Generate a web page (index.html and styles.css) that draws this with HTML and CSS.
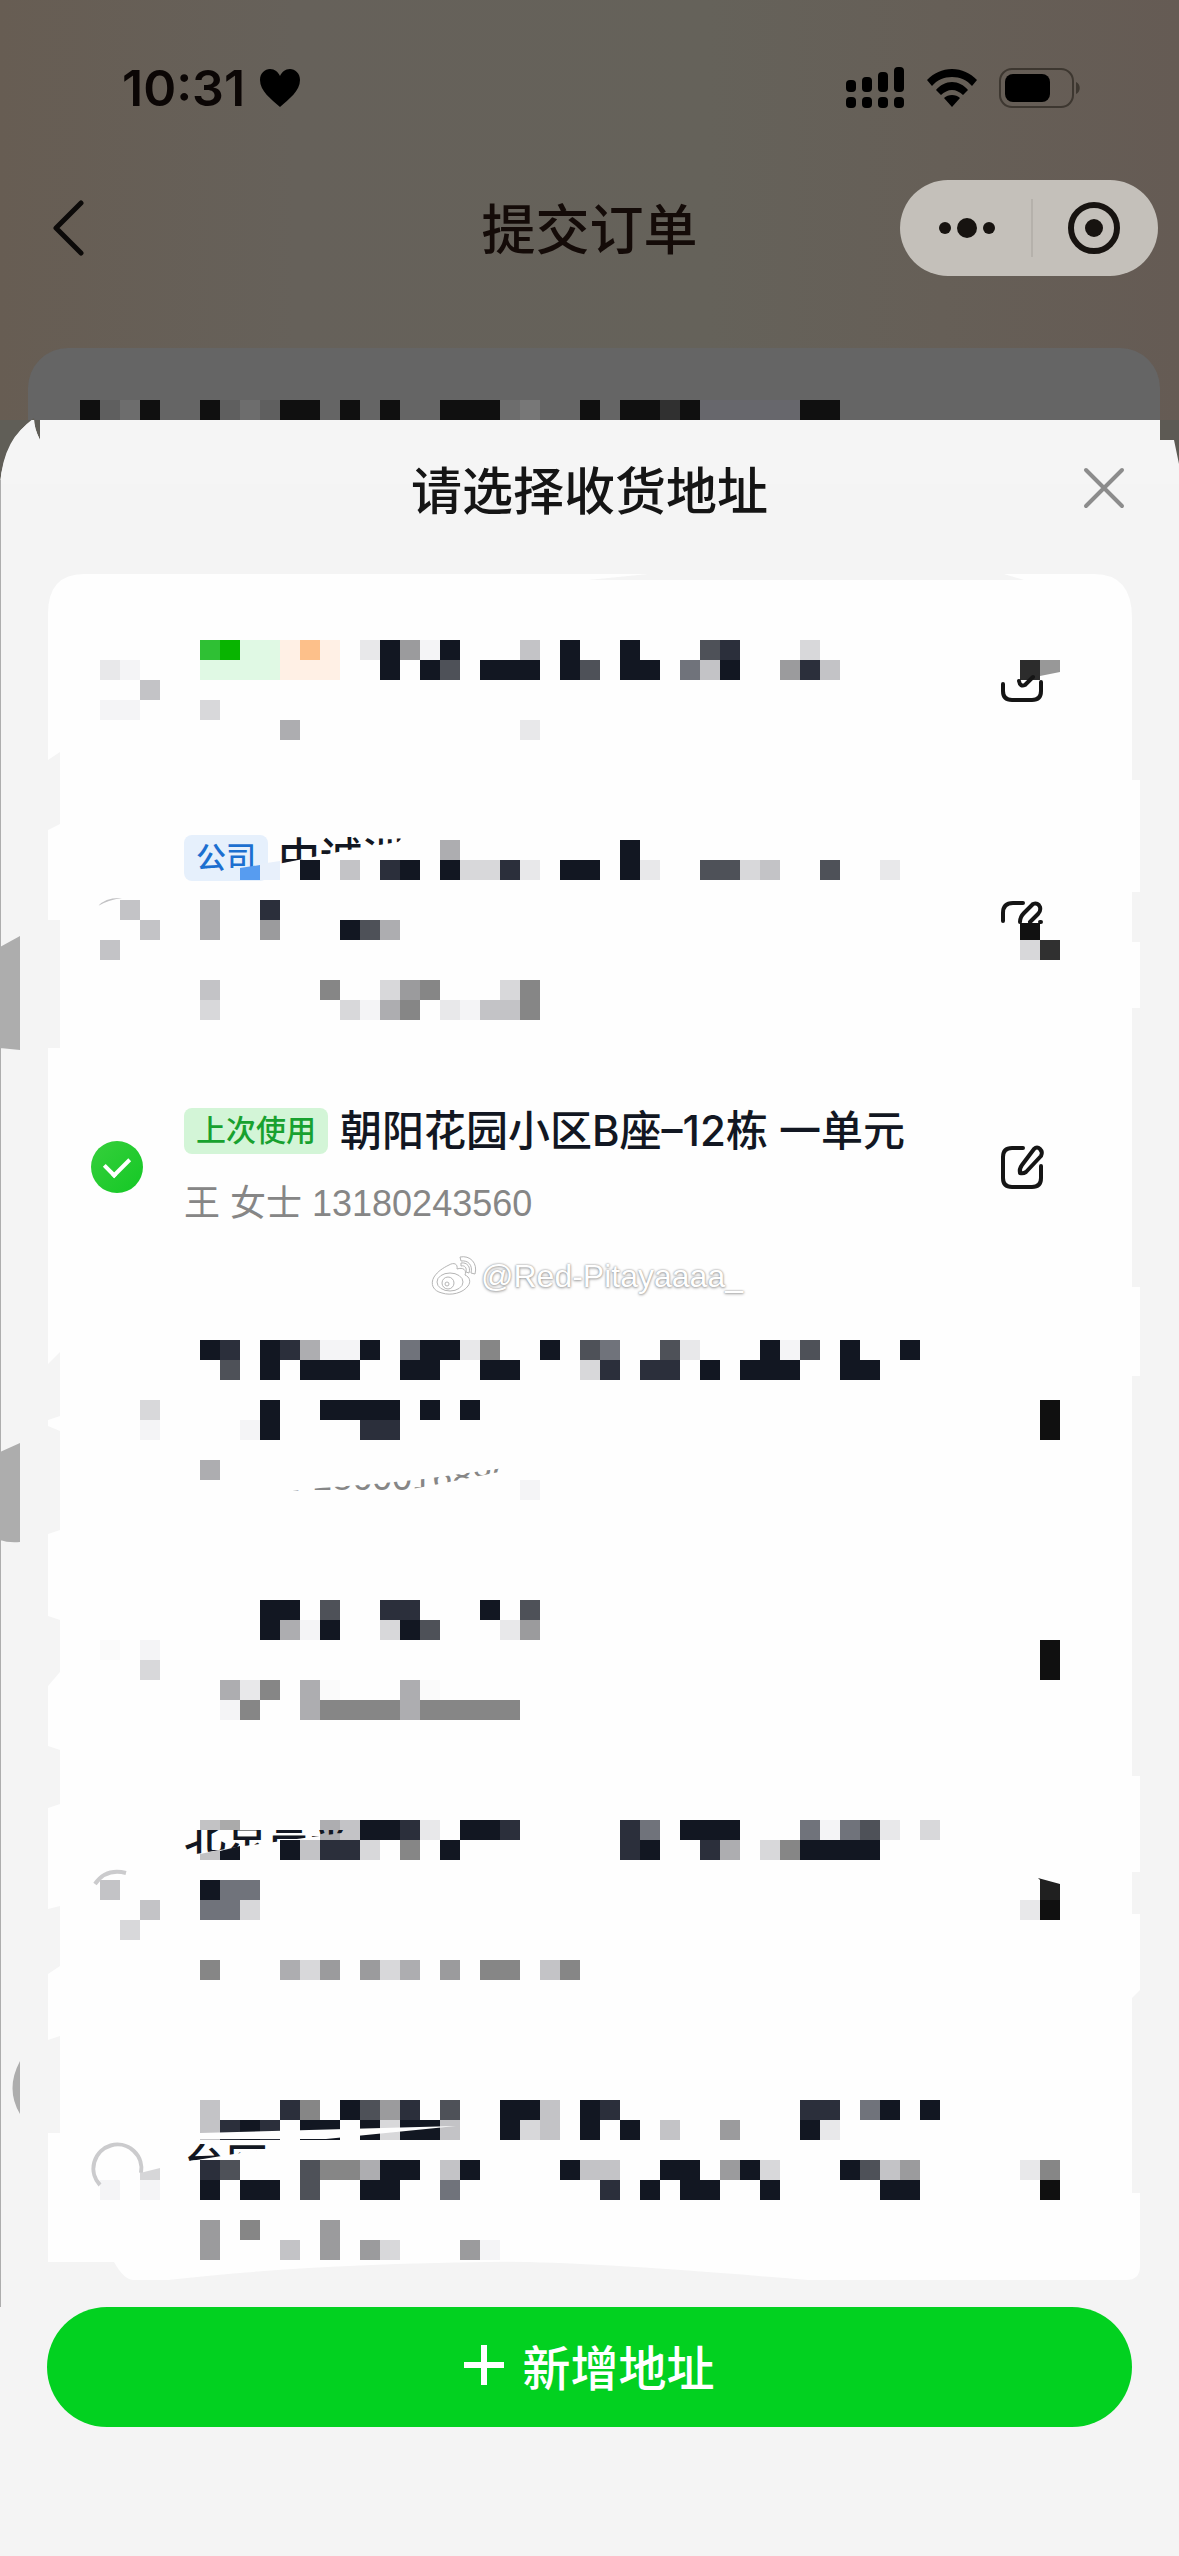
FILE: index.html
```html
<!DOCTYPE html>
<html lang="zh-CN">
<head>
<meta charset="utf-8">
<meta name="viewport" content="width=device-width, initial-scale=1">
<title>提交订单</title>
<link rel="stylesheet" href="styles.css">
</head>
<body>
<header class="top">
  <div class="status">
    <div class="status-left">
      <span class="clock">10:31</span>
      <svg width="42" height="40" viewBox="0 0 42 40" aria-hidden="true"><path d="M21 39C12 31 1 23 1 12 1 5 6 1 11 1c5 0 8 3 10 7 2-4 5-7 10-7 5 0 10 4 10 11 0 11-11 19-20 27z"/></svg>
    </div>
    <div class="status-right">
      <svg width="60" height="42" viewBox="0 0 60 42" aria-hidden="true"><g><rect x="1" y="13" width="10" height="12" rx="4"/><rect x="17" y="10" width="10" height="15" rx="4"/><rect x="33" y="5" width="10" height="20" rx="4"/><rect x="49" y="0" width="10" height="25" rx="4"/><rect x="1" y="30" width="10" height="11" rx="4"/><rect x="17" y="30" width="10" height="11" rx="4"/><rect x="33" y="30" width="10" height="11" rx="4"/><rect x="49" y="30" width="10" height="11" rx="4"/></g></svg>
      <svg width="50" height="38" viewBox="0 0 50 38" aria-hidden="true"><path d="M25 0c10 0 18 4 25 11l-5 6C40 11 33 8 25 8S10 11 5 17l-5-6C7 4 15 0 25 0zM25 13c6 0 12 3 16 8l-5 5c-3-3-7-5-11-5s-8 2-11 5l-5-5c4-5 10-8 16-8zM25 26c3 0 6 1 8 3l-8 9-8-9c2-2 5-3 8-3z"/></svg>
      <svg width="82" height="40" viewBox="0 0 82 40" aria-hidden="true"><rect x="1" y="1" width="73" height="38" rx="12" fill="none" stroke="#3d3730" stroke-width="2"/><rect x="6" y="6" width="45" height="28" rx="8"/><path d="M77 14c5 2 5 10 0 12z" fill="#3d3730"/></svg>
    </div>
  </div>
  <nav class="nav">
    <button class="back" type="button" aria-label="返回"><svg width="32" height="56" viewBox="0 0 32 56"><path d="M29 3L4 28l25 25" fill="none" stroke="#0c0a09" stroke-width="5" stroke-linecap="round" stroke-linejoin="round"/></svg></button>
    <h1 class="nav-title">提交订单</h1>
    <div class="capsule">
      <button type="button" aria-label="更多"><svg width="60" height="24" viewBox="0 0 60 24" fill="#171310"><circle cx="8" cy="12" r="6"/><circle cx="30" cy="12" r="10"/><circle cx="52" cy="12" r="6"/></svg></button>
      <i class="divider"></i>
      <button type="button" aria-label="关闭"><svg width="54" height="54" viewBox="0 0 54 54"><circle cx="27" cy="27" r="23" fill="none" stroke="#171310" stroke-width="6"/><circle cx="27" cy="27" r="9" fill="#171310"/></svg></button>
    </div>
  </nav>
  <div class="order"><svg class="mosaic" data-rows="BOPB..BOPOBB.B.B..BBBPQ..B.BBABRRRRRBB"></svg></div>
</header>

<main class="sheet">
  <svg class="sheet-top" viewBox="0 0 1179 64" preserveAspectRatio="none" aria-hidden="true"><path d="M0 0h40v20q-6-12-6-22Q4 20 0 64z" fill="#605e57"/><path d="M0 64Q4 16 34 0q0 8 6 20V0h1120v20h14l5 30v14z" fill="#f5f5f5"/><path d="M1160 0h19v44l-5-24h-14z" fill="#5d5a54"/></svg>
  <svg class="sheet-left" width="20" height="1887" viewBox="0 0 20 1887" aria-hidden="true"><g fill="#adadad"><path d="M0 60h1v1827H0zM0 527l20-11v114l-20-2zM0 1032l20-9v99q-12 1-20-2zM20 1641v53q-15-25 0-53z"/></g></svg>
  <div class="sheet-head">
    <h2 class="sheet-title">请选择收货地址</h2>
    <button class="close" type="button" aria-label="关闭弹窗"><svg width="42" height="42" viewBox="0 0 42 42"><path d="M3 3l36 36M39 3L3 39" stroke="#8c8c8c" stroke-width="4" stroke-linecap="round"/></svg></button>
  </div>

  <form class="card">
    <svg class="card-bg" viewBox="0 0 1092 1706" preserveAspectRatio="none" aria-hidden="true"><path fill="#fefefe" d="M36 0H600l-60 6H976l-20-6h90q38 0 38 44V206h8V318h-8V368h8V434h-8V713h8V802h-8V1202h8V1298h-8V1340h8V1416l-8 8V1619h8V1692q0 14-14 14H760Q520 1686 440 1688 260 1690 120 1706H86q-10 0-20-18H0V1559h12V1462L0 1466V1400l12-8V1332L0 1335V1234l12-4V1176L0 1172V1112l12-14V1046L0 1042V960l12-4V857L0 852V846l12-4V778L0 790V474h12V346H0V256l12-6V178L0 186V40Q0 0 36 0z"/></svg>
    <ul class="list">
      <li class="item">
        <div class="pick"><svg class="mosaic" data-rows="/MN/..J/NN"></svg></div>
        <div class="body"><svg class="mosaic" data-rows="ghppqoq.MKHNK...J.K..K...ED...L/ppppqqq..K.KE.KKK.KE.KK.FJK..HDJ//L/....I...........M/"></svg></div>
        <div class="edit">
          <svg class="over" width="64" height="62" viewBox="0 0 64 62" aria-hidden="true"><path d="M20 20h20v20H20z" fill="#2c2c2c"/><path d="M40 20h20v12l-20 4z" fill="#989898"/><path d="M3 44v7q0 9 9 9h20q9 0 9-9V42M19 41q1 6 6 4l8-8" fill="none" stroke="#151515" stroke-width="4" stroke-linecap="round"/></svg>
        </div>
      </li>
      <li class="item">
        <div class="pick"><svg class="mosaic" data-rows="///.J/..J/J"></svg>
          <svg class="over" width="80" height="70" viewBox="0 0 80 70" aria-hidden="true"><path d="M50 66q8-9 24-8-14 2-24 8z" fill="#c2c2c4"/></svg></div>
        <div class="body">
          <span class="tag tag-blue tag-over">公司</span>
          <svg class="mosaic" data-rows="............I........K/.....K.J.DK.KLLDM.KK.KM..EELJ..E..M//I..D/I..H...KEI///J.....G..LHG...LG/L......LNIG.MNJJG"></svg>
          <span class="cut cut-company">中诚洲</span>
          <svg class="over" width="100" height="40" viewBox="0 0 100 40" aria-hidden="true"><path d="M56 28l20-3v15H56z" fill="#579cf0"/><path d="M76 24l20-3v19H76z" fill="#e8f0fb"/></svg>
        </div>
        <div class="edit">
          <svg class="over" width="64" height="100" viewBox="0 0 64 100" aria-hidden="true"><path d="M3 81v-8q0-10 10-10h10M20 82q0-5 4-9l9-9q5-2 7 3 1 4-2 7l-8 8M40 82h1" fill="none" stroke="#151515" stroke-width="4" stroke-linecap="round"/><path d="M20 83h20v17H20z" fill="#111"/></svg>
          <svg class="mosaic" data-rows="/////LA"></svg>
        </div>
      </li>
      <li class="item item-active">
        <div class="pick"><input class="radio" type="radio" name="address" id="addr3" checked></div>
        <label class="body" for="addr3">
          <span class="line"><span class="tag tag-green">上次使用</span><strong class="address">朝阳花园小区B座–12栋 一单元</strong></span>
          <span class="contact">王 女士 13180243560</span>
        </label>
        <button class="edit" type="button" aria-label="编辑地址"><svg width="46" height="46" viewBox="0 0 46 46" fill="none" stroke="#151515" stroke-width="4" stroke-linecap="round" stroke-linejoin="round"><path d="M23 4H12Q3 4 3 13v21q0 9 9 9h20q9 0 9-9V22"/><path d="M34 5q3-3 6 0t1 7L26 28q-3 2-6 1-1-4 2-8z"/></svg></button>
      </li>
      <li class="item">
        <div class="pick"><svg class="mosaic" data-rows="///..L/..N"></svg></div>
        <div class="body"><svg class="mosaic" data-rows="KD.KDINNK.FKKMG..K.EF..EM...KNE.K..K/.E.K.KKK..KK..KK...LD.DD.K.KKK..KK//...K..KKKK.K.K/..NK....DD//I/................N/"></svg>
          <span class="cut cut-phone">王 女士 1860016880</span></div>
        <div class="edit"><svg class="mosaic" data-rows="///.B/.B"></svg></div>
      </li>
      <li class="item">
        <div class="pick"><svg class="mosaic" data-rows="//S.N/..L"></svg></div>
        <div class="body"><svg class="mosaic" data-rows="...KK.E..DD...K.E/...KINK..LKE...MH///.IMG.IS...IS/.NG..IGGGGIGGGGG/"></svg></div>
        <div class="edit"><svg class="mosaic" data-rows="//.B/.B"></svg></div>
      </li>
      <li class="item">
        <div class="pick"><svg class="mosaic" data-rows="///J/..J/.L"></svg>
          <svg class="over" width="90" height="70" viewBox="0 0 90 70" aria-hidden="true"><path d="M47 64q11-16 31-11" fill="none" stroke="#cbcbcd" stroke-width="4"/></svg></div>
        <div class="body"><svg class="mosaic" data-rows="......IJKKDM.KKD.....DF.KKK...FNFEM.L/....KJDDL.G.K........DK..DI.LGKKKK//KFF/FFL///G...ILH.HLI.H.GG.JG//"></svg>
          <span class="cut cut-beijing">北京昌平</span>
          <svg class="over" width="60" height="40" viewBox="0 0 60 40" aria-hidden="true"><path d="M16 0h20v10H16z" fill="#c2c2c4"/><path d="M36 0h20v10H36z" fill="#aaa"/><path d="M16 34l20-4v10H16z" fill="#c2c2c4"/><path d="M36 31l20-5v14H36z" fill="#121722"/></svg></div>
        <div class="edit"><svg class="mosaic" data-rows="////MB"></svg>
          <svg class="over" width="60" height="80" viewBox="0 0 60 80" aria-hidden="true"><path d="M38 58l22 6v16H40V60z" fill="#202020"/></svg></div>
      </li>
      <li class="item">
        <div class="pick"><svg class="mosaic" data-rows="////N.N"></svg>
          <svg class="over" width="120" height="100" viewBox="0 0 120 100" aria-hidden="true"><path d="M52 85a24 24 0 1 1 41-12" fill="none" stroke="#cbcbcd" stroke-width="4"/><path d="M92 73l20-5v12H92z" fill="#d6d6d8"/></svg></div>
        <div class="body"><svg class="mosaic" data-rows="J...DG.KEHD.E..KKJ.KD.........DD.FK.K/JDKD.KK.KLKKJ..KLJ.K.K.J..H...KM//DE...EGGIKK.JK....KJJ..KK.HKL...KEJH/K.KK.E..KK..F.......D.K.KK..K.....KK//H.G...H/H...J.H.HL...HN"></svg>
          <svg class="over" width="280" height="50" viewBox="0 0 280 50" aria-hidden="true"><path d="M16 33l256-7-130 13H16z" fill="#fefefe"/></svg>
          <span class="cut cut-district">台区</span></div>
        <div class="edit"><svg class="mosaic" data-rows="///MG/.B"></svg></div>
      </li>
    </ul>
    <div class="watermark">
      <svg width="46" height="40" viewBox="0 0 46 40" aria-hidden="true"><g fill="#fff" stroke="#b5b5b5" stroke-width="1"><path d="M18 9c5-3 9-1 8 4 6-2 10 1 8 6 5 2 6 7 3 11-5 7-17 10-26 7C2 35-1 28 3 21 7 15 12 12 18 9z"/><ellipse cx="19" cy="26" rx="13" ry="9"/><circle cx="17" cy="27" r="6"/><circle cx="16" cy="28" r="2"/><path d="M30 7c6-1 10 4 8 10l-3-1c1-4-1-7-5-6zM29 1c10-2 18 6 15 17l-4-1c2-8-3-13-10-12z"/></g></svg>
      <span>@Red-Pitayaaaa_</span>
    </div>
  </form>

  <button class="add" type="button"><svg width="40" height="40" viewBox="0 0 40 40" aria-hidden="true"><path d="M20 0v40M0 20h40" stroke="#fff" stroke-width="6"/></svg>新增地址</button>
</main>
<script src="mosaic.js"></script>
</body>
</html>
```
FILE: styles.css
```css
* { box-sizing: border-box; }

body {
  margin: 0;
  min-height: 100vh;
  background: #f4f4f4;
  color: #151515;
  font-family: Inter, "Noto Sans CJK SC", sans-serif;
}

h1, h2, ul { margin: 0; padding: 0; }

button {
  border: 0;
  padding: 0;
  background: none;
  color: inherit;
  font: inherit;
}

svg { display: block; flex: none; }

.top {
  display: flex;
  flex-direction: column;
  height: 420px;
  background: linear-gradient(90deg, #675d53, #66615a 25%, #65625a 60%, #665f57 80%, #655b54);
}

.status {
  display: flex;
  justify-content: space-between;
  align-items: center;
  height: 176px;
  padding: 0 98px 0 122px;
}

.status-left { display: flex; align-items: center; gap: 14px; }
.status-right { display: flex; align-items: center; gap: 22px; }
.clock { font-size: 50px; font-weight: 600; line-height: 60px; color: #0b0605; }

.nav {
  display: grid;
  grid-template-columns: 1fr auto 1fr;
  align-items: center;
  height: 104px;
  padding: 0 21px;
}

.back { justify-self: start; padding-left: 31px; }

.nav-title {
  padding-top: 6px;
  font-size: 54px;
  font-weight: 500;
  line-height: 80px;
  color: #140b08;
}

.capsule {
  display: flex;
  align-items: center;
  justify-content: space-between;
  justify-self: end;
  width: 258px;
  height: 96px;
  padding: 0 37px;
  border-radius: 48px;
  background: #c4c0ba;
}

.divider { width: 2px; height: 58px; background: #b5b1ab; }

.order {
  flex: 1;
  margin: 68px 19px 0 28px;
  padding: 52px 0 0 52px;
  border-radius: 40px 40px 0 0;
  background: #656565;
}

.sheet { position: relative; padding-bottom: 129px; background: #f4f4f4; }
.sheet-top { position: absolute; top: 0; left: 0; width: 100%; height: 64px; overflow: visible; }
.sheet-left { position: absolute; top: 0; left: 0; }

.sheet-head {
  position: relative;
  display: grid;
  grid-template-columns: 1fr auto 1fr;
  align-items: center;
  height: 154px;
  padding: 0 54px 10px;
}

.sheet-title { grid-column: 2; font-size: 51px; font-weight: 500; line-height: 72px; }
.close { justify-self: end; padding-bottom: 8px; }

.card { position: relative; margin: 0 39px 0 48px; padding: 66px 0 20px; }
.card-bg { position: absolute; inset: 0; width: 100%; height: 100%; }

.list {
  position: relative;
  display: flex;
  flex-direction: column;
  gap: 80px;
  list-style: none;
}

.item { display: grid; grid-template-columns: 136px 1fr 140px; }
.pick, .body, .edit { position: relative; }
.pick { padding-left: 52px; }
.body > .mosaic { margin-left: 16px; }
.edit > .mosaic { margin-left: 20px; }
.over { position: absolute; top: 0; left: 0; }

.item-active { align-items: center; margin-bottom: 26px; }
.item-active .pick { padding-left: 43px; }

.radio {
  display: grid;
  place-items: center;
  appearance: none;
  width: 52px;
  height: 52px;
  margin: 0;
  border-radius: 50%;
  background: linear-gradient(135deg, #36cf3c, #14c825);
}

.radio::after {
  content: "";
  width: 12px;
  height: 20px;
  margin-bottom: 6px;
  border: solid #fff;
  border-width: 0 4px 4px 0;
  rotate: 45deg;
}

.item-active .body { display: flex; flex-direction: column; gap: 12px; }
.line { display: flex; align-items: center; gap: 12px; height: 62px; }

.tag {
  flex: none;
  height: 46px;
  padding: 0 12px;
  border-radius: 8px;
  font-size: 30px;
  font-weight: 500;
  line-height: 44px;
}

.tag-green { background: #d3f5d7; color: #18a12f; }
.tag-blue { background: #e6f0fc; color: #1c6fd0; }
.tag-over { position: absolute; top: -5px; left: 0; }

.address { font-size: 42px; font-weight: 500; line-height: 62px; color: #121722; white-space: nowrap; }

.contact, .cut-phone {
  color: #868686;
  font-family: "Liberation Sans", "Noto Sans CJK SC", sans-serif;
  font-size: 36px;
  line-height: 60px;
}

/* Address text left visible between redacted cells */
.cut {
  position: absolute;
  left: 0;
  white-space: nowrap;
}

.cut-company, .cut-beijing, .cut-district {
  font-size: 42px;
  font-weight: 500;
  line-height: 60px;
  color: #121722;
}

.cut-company {
  top: -12px;
  left: 94px;
  clip-path: polygon(0 8px, 126px 8px, 120px 14px, 70px 22px, 40px 28px, 0 36px);
}

.cut-phone {
  top: 108px;
  clip-path: polygon(90px 45px, 136px 40px, 190px 36px, 240px 31px, 320px 20px, 320px 23px, 250px 37px, 200px 46px, 90px 46px);
}

.cut-beijing {
  top: -14px;
  clip-path: polygon(0 24px, 165px 24px, 165px 26px, 60px 40px, 0 50px);
}

.cut-district {
  top: 34px;
  clip-path: polygon(0 10px, 100px 10px, 100px 12px, 0 28px);
}

.watermark {
  position: absolute;
  top: 678px;
  left: 0;
  right: 0;
  display: flex;
  justify-content: center;
  align-items: center;
  gap: 4px;
  height: 48px;
  padding-right: 14px;
  color: #fff;
  font-family: "Liberation Sans", sans-serif;
  font-size: 32px;
  text-shadow: 0 0 2px #888, 0 1px 3px #aaa;
}

.add {
  display: flex;
  justify-content: center;
  align-items: center;
  gap: 18px;
  width: calc(100% - 94px);
  height: 120px;
  margin: 27px 47px 0;
  padding-bottom: 4px;
  border-radius: 60px;
  background: #02d120;
  color: #fff;
  font-size: 48px;
  font-weight: 500;
}
```
FILE: mosaic.js
```js
// Draws redacted areas: one letter per 20px cell, "/" starts a new row, "." is empty.
const SIZE = 20;
const COLORS = {
  A: "#303030", B: "#101010", K: "#121722", D: "#2b2f3b", E: "#4e5158",
  F: "#70737b", G: "#868686", H: "#9b9b9d", I: "#adadb0", J: "#c3c3c6",
  L: "#d8d8da", M: "#e8e8ea", N: "#f4f4f6", S: "#fafafa", O: "#5f5f5f",
  P: "#6d6d6d", Q: "#777777", R: "#67676c", g: "#2fc034", h: "#08b400",
  p: "#e0f9e4", q: "#fff0e5", o: "#fdc08a"
};

document.querySelectorAll(".mosaic").forEach((svg) => {
  const rows = svg.dataset.rows.split("/");
  const columns = Math.max(...rows.map((row) => row.length), 1);
  svg.setAttribute("width", columns * SIZE);
  svg.setAttribute("height", rows.length * SIZE);
  svg.setAttribute("shape-rendering", "crispEdges");
  svg.setAttribute("aria-hidden", "true");
  rows.forEach((row, y) => {
    [...row].forEach((key, x) => {
      if (!COLORS[key]) return;
      const cell = document.createElementNS("http://www.w3.org/2000/svg", "rect");
      cell.setAttribute("x", x * SIZE);
      cell.setAttribute("y", y * SIZE);
      cell.setAttribute("width", SIZE);
      cell.setAttribute("height", SIZE);
      cell.setAttribute("fill", COLORS[key]);
      svg.append(cell);
    });
  });
});
```
